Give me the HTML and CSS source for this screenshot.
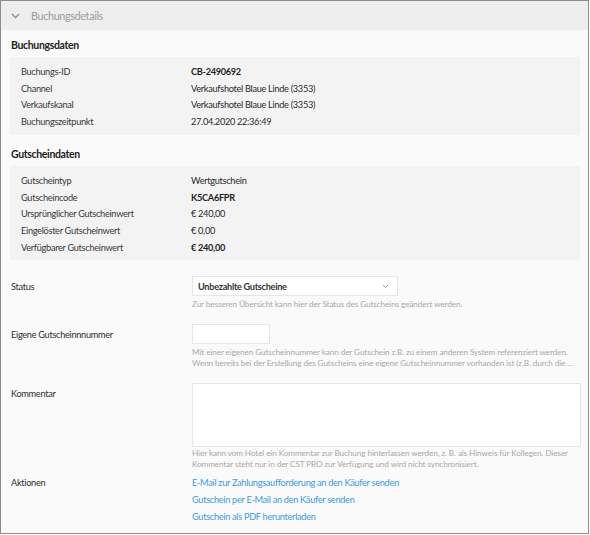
FILE: index.html
```html
<!DOCTYPE html>
<html lang="de">
<head>
<meta charset="utf-8">
<title>Buchungsdetails</title>
<link rel="stylesheet" href="styles.css">
</head>
<body>
<div class="panel">
  <div class="panel-header">
    <svg class="chev" width="9" height="6" viewBox="0 0 9 6"><path d="M1 1 L4.5 4.6 L8 1" fill="none" stroke="#8a8a8a" stroke-width="1.3"/></svg>
    <span class="panel-title">Buchungsdetails</span>
  </div>
  <div class="panel-body">
    <h3 class="section-title">Buchungsdaten</h3>
    <dl class="data-box">
      <div class="data-row"><dt>Buchungs-ID</dt><dd class="strong">CB-2490692</dd></div>
      <div class="data-row"><dt>Channel</dt><dd>Verkaufshotel Blaue Linde (3353)</dd></div>
      <div class="data-row"><dt>Verkaufskanal</dt><dd>Verkaufshotel Blaue Linde (3353)</dd></div>
      <div class="data-row"><dt>Buchungszeitpunkt</dt><dd>27.04.2020 22:36:49</dd></div>
    </dl>
    <h3 class="section-title second">Gutscheindaten</h3>
    <dl class="data-box">
      <div class="data-row"><dt>Gutscheintyp</dt><dd>Wertgutschein</dd></div>
      <div class="data-row"><dt>Gutscheincode</dt><dd class="strong">K5CA6FPR</dd></div>
      <div class="data-row"><dt>Ursprünglicher Gutscheinwert</dt><dd>€ 240,00</dd></div>
      <div class="data-row"><dt>Eingelöster Gutscheinwert</dt><dd>€ 0,00</dd></div>
      <div class="data-row"><dt>Verfügbarer Gutscheinwert</dt><dd class="strong">€ 240,00</dd></div>
    </dl>

    <div class="form-row status-row">
      <label class="form-label">Status</label>
      <div class="form-field">
        <div class="select">
          <span>Unbezahlte Gutscheine</span>
          <svg class="select-chev" width="7" height="5" viewBox="0 0 7 5"><path d="M1 1 L3.5 3.5 L6 1" fill="none" stroke="#9a9a9a" stroke-width="1"/></svg>
        </div>
        <p class="help">Zur besseren Übersicht kann hier der Status des Gutscheins geändert werden.</p>
      </div>
    </div>

    <div class="form-row">
      <label class="form-label">Eigene Gutscheinnnummer</label>
      <div class="form-field">
        <div class="text-input"></div>
        <p class="help"><span class="line">Mit einer eigenen Gutscheinnummer kann der Gutschein z.B. zu einem anderen System referenziert werden.</span><span class="line">Wenn bereits bei der Erstellung des Gutscheins eine eigene Gutscheinnummer vorhanden ist (z.B. durch die ...</span></p>
      </div>
    </div>

    <div class="form-row">
      <label class="form-label">Kommentar</label>
      <div class="form-field">
        <div class="textarea"></div>
        <p class="help tight"><span class="line">Hier kann vom Hotel ein Kommentar zur Buchung hinterlassen werden, z. B. als Hinweis für Kollegen. Dieser</span><span class="line">Kommentar steht nur in der CST PRO zur Verfügung und wird nicht synchronisiert.</span></p>
      </div>
    </div>

    <div class="form-row actions-row">
      <span class="form-label actions-label">Aktionen</span>
      <div class="form-field links">
        <a class="action-link" href="#">E-Mail zur Zahlungsaufforderung an den Käufer senden</a>
        <a class="action-link" href="#">Gutschein per E-Mail an den Käufer senden</a>
        <a class="action-link" href="#">Gutschein als PDF herunterladen</a>
      </div>
    </div>
  </div>
</div>
</body>
</html>
```

FILE: styles.css
```css
* { box-sizing: border-box; }
html, body { margin: 0; padding: 0; background: #ffffff; }
body { font-family: Lato, "Noto Sans", sans-serif; color: #333; letter-spacing: -0.3px; }

.panel {
  width: 589px;
  height: 534px;
  border: 1px solid #8c8c8c;
  background: #fafafa;
  overflow: hidden;
}

.panel-header {
  height: 29px;
  background: #eeeeee;
  display: flex;
  align-items: center;
  padding-left: 10px;
}
.chev { display: block; margin-right: 11px; margin-top: 1px; }
.panel-title { font-size: 10.8px; letter-spacing: -0.35px; color: #9c9c9c; }

.panel-body { padding: 7px 8px 0 9px; }

.section-title {
  margin: 0 0 4px 1px;
  font-size: 10.5px;
  letter-spacing: -0.35px;
  line-height: 16px;
  font-weight: 700;
  color: #222;
}
.section-title.second { margin-top: 11px; }

.data-box {
  margin: 0;
  background: #f3f3f3;
  padding: 7px 0 4px 11px;
}
.data-row {
  display: grid;
  grid-template-columns: 170px 1fr;
  font-size: 9.2px;
  line-height: 16.7px;
}
.data-row dt { color: #383838; }
.data-row dd { margin: 0; color: #2a2a2a; }
.data-row dd.strong { font-weight: 700; color: #1e1e1e; }

.form-row {
  display: grid;
  grid-template-columns: 181px 1fr;
  margin-top: 13px;
  margin-left: 1px;
}
.status-row { margin-top: 16px; }
.form-label {
  font-size: 9.2px;
  line-height: 20px;
  padding-top: 1px;
  color: #2e2e2e;
}
.form-field { min-width: 0; }

.select {
  width: 206px;
  height: 20px;
  background: #fff;
  border: 1px solid #e6e6e6;
  display: flex;
  align-items: center;
  justify-content: space-between;
  padding: 0 8px 0 5px;
  font-size: 9.2px;
  font-weight: 700;
  color: #333;
}
.select-chev { display: block; }

.text-input {
  width: 78px;
  height: 20px;
  background: #fff;
  border: 1px solid #e6e6e6;
}
.textarea {
  width: 389px;
  height: 64px;
  background: #fff;
  border: 1px solid #e6e6e6;
}

.help {
  margin: 3px 0 0;
  font-size: 8.2px;
  letter-spacing: -0.1px;
  line-height: 11.5px;
  color: #a8a8a8;
}
.help.tight { margin-top: 1px; line-height: 11.3px; }
.help .line { display: block; white-space: nowrap; }

.actions-row { margin-top: 5px; }
.actions-label { line-height: 16.6px; padding-top: 0; }
.links { display: flex; flex-direction: column; }
.action-link {
  font-size: 9.2px;
  line-height: 16.6px;
  color: #3b9be0;
  text-decoration: none;
}
```
